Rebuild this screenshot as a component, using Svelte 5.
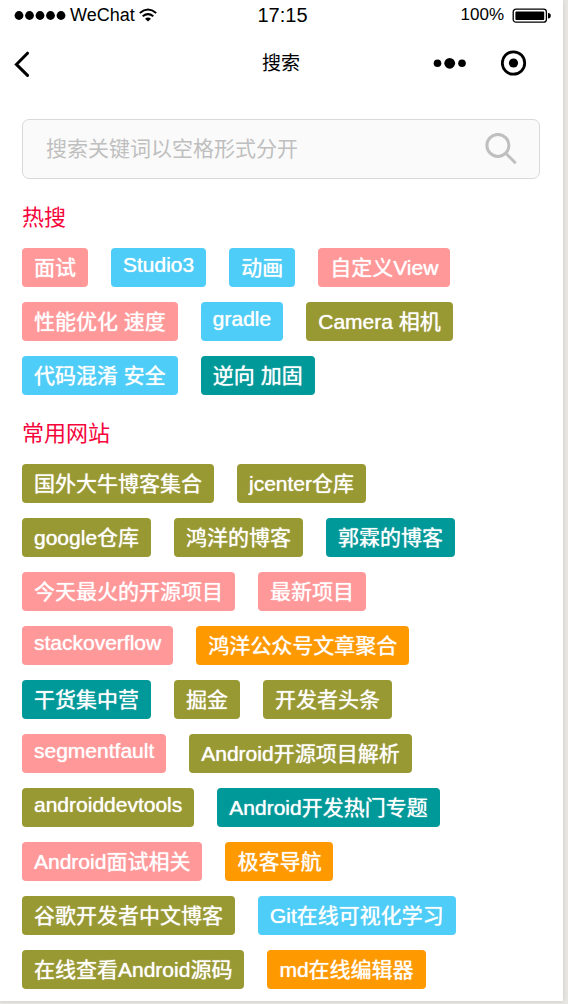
<script>
  const groups = [
    {
      title: '热搜',
      tags: [
        ['面试', 'pink'],
        ['Studio3', 'blue'],
        ['动画', 'blue'],
        ['自定义View', 'pink'],
        ['性能优化 速度', 'pink'],
        ['gradle', 'blue'],
        ['Camera 相机', 'olive'],
        ['代码混淆 安全', 'blue'],
        ['逆向 加固', 'teal']
      ]
    },
    {
      title: '常用网站',
      tags: [
        ['国外大牛博客集合', 'olive'],
        ['jcenter仓库', 'olive'],
        ['google仓库', 'olive'],
        ['鸿洋的博客', 'olive'],
        ['郭霖的博客', 'teal'],
        ['今天最火的开源项目', 'pink'],
        ['最新项目', 'pink'],
        ['stackoverflow', 'pink'],
        ['鸿洋公众号文章聚合', 'orange'],
        ['干货集中营', 'teal'],
        ['掘金', 'olive'],
        ['开发者头条', 'olive'],
        ['segmentfault', 'pink'],
        ['Android开源项目解析', 'olive'],
        ['androiddevtools', 'olive'],
        ['Android开发热门专题', 'teal'],
        ['Android面试相关', 'pink'],
        ['极客导航', 'orange'],
        ['谷歌开发者中文博客', 'olive'],
        ['Git在线可视化学习', 'blue'],
        ['在线查看Android源码', 'olive'],
        ['md在线编辑器', 'orange']
      ]
    }
  ];

  const isLatin = (text) => /^[\x20-\x7e]+$/.test(text);
  let query = $state('');
</script>

<div class="backdrop">
  <div class="screen">
    <div class="status">
      <div class="carrier">
        <svg width="52" height="10" viewBox="0 0 52 10" aria-hidden="true">
          {#each [5, 15.5, 26, 36.5, 47] as cx}
            <circle {cx} cy="5.5" r="4.4" />
          {/each}
        </svg>
        <span>WeChat</span>
        <svg width="18" height="14" viewBox="0 0 18 14" fill="none" stroke="#000" stroke-width="2" aria-hidden="true">
          <path d="M.8 4.9Q9-1.8 17.2 4.9" />
          <path d="M3.7 8.2Q9 4 14.3 8.2" />
          <path d="M6 10.8Q9 8.4 12 10.8L9 13.5Z" fill="#000" stroke="none" />
        </svg>
      </div>
      <time>17:15</time>
      <div class="power">
        <span>100%</span>
        <svg width="39" height="15" viewBox="0 0 39 15" aria-hidden="true">
          <rect x="1.2" y="1.2" width="33.2" height="13" rx="2.8" fill="none" stroke="#000" stroke-width="1.3" />
          <rect x="3.4" y="3.4" width="28.8" height="8.6" rx="1" />
          <path d="M36 5Q38.8 5.2 38.8 7.7T36 10.4Z" />
        </svg>
      </div>
    </div>

    <header>
      <button aria-label="返回">
        <svg width="16" height="28" viewBox="0 0 16 28" fill="none" stroke="#000" stroke-width="3" stroke-linecap="round" aria-hidden="true">
          <path d="M13.5 4.2L2.4 15.4L13.5 26.4" />
        </svg>
      </button>
      <h1>搜索</h1>
      <div class="actions">
        <button aria-label="更多">
          <svg width="34" height="12" viewBox="0 0 34 12" aria-hidden="true">
            <circle cx="4.5" cy="6.3" r="3.8" />
            <circle cx="16.7" cy="6.3" r="5.4" />
            <circle cx="29" cy="6.3" r="3.8" />
          </svg>
        </button>
        <button aria-label="关闭">
          <svg width="26" height="26" viewBox="0 0 26 26" aria-hidden="true">
            <circle cx="12.5" cy="13" r="11.2" fill="none" stroke="#000" stroke-width="2.8" />
            <circle cx="12.5" cy="13" r="4.6" />
          </svg>
        </button>
      </div>
    </header>

    <main>
      <form class="search" onsubmit={(e) => e.preventDefault()}>
        <input type="text" bind:value={query} aria-label="搜索关键词" placeholder="搜索关键词以空格形式分开" />
        <button aria-label="搜索">
          <svg width="32" height="32" viewBox="0 0 32 32" fill="none" stroke="#bfbfbf" stroke-width="3" aria-hidden="true">
            <circle cx="12.9" cy="12.4" r="11" />
            <path d="M20.7 20.2L30.7 30.2" />
          </svg>
        </button>
      </form>

      {#each groups as group}
        <section>
          <h2>{group.title}</h2>
          <div class="tags">
            {#each group.tags as [text, color]}
              <button class="tag {color}" class:latin={isLatin(text)}>{text}</button>
            {/each}
          </div>
        </section>
      {/each}
    </main>
  </div>
</div>

<style>
  :global(body) {
    margin: 0;
    background: #e8e7e3;
  }
  .backdrop {
    padding: 0 5px 3px 0;
    color: #000;
    font-family: "Liberation Sans", "Noto Sans CJK SC", sans-serif;
  }
  .screen {
    background: #fff;
    box-shadow: 0 0 5px #c8c8c4;
    padding-bottom: 12px;
  }
  button {
    display: flex;
    align-items: center;
    padding: 0;
    border: 0;
    background: none;
    font: inherit;
    cursor: pointer;
  }
  svg {
    display: block;
    flex: none;
  }
  .status {
    display: grid;
    grid-template-columns: 1fr auto 1fr;
    align-items: center;
    height: 30px;
    padding: 0 12px 0 14px;
    font-size: 17px;
  }
  .carrier,
  .power {
    display: flex;
    align-items: center;
  }
  .carrier {
    font-size: 18px;
    gap: 4px;
  }
  .power {
    justify-content: flex-end;
    gap: 8px;
  }
  time {
    font-size: 20px;
  }
  header {
    display: grid;
    grid-template-columns: 1fr auto 1fr;
    align-items: center;
    height: 66px;
    padding: 0 36px 0 14px;
    margin-bottom: 23px;
  }
  h1 {
    margin: 0;
    padding: 2px 0 0 21px;
    font-size: 19px;
    font-weight: 400;
    line-height: 26px;
  }
  .actions {
    display: flex;
    justify-content: flex-end;
    gap: 34px;
  }
  main {
    padding: 0 23px 0 22px;
  }
  .search {
    display: flex;
    align-items: center;
    height: 60px;
    box-sizing: border-box;
    padding: 0 22px 0 23px;
    border: 1px solid #d9d9d9;
    border-radius: 7px;
    background: #fafafa;
  }
  input {
    flex: 1;
    min-width: 0;
    padding: 0;
    border: 0;
    outline: 0;
    background: none;
    color: #333;
    font: inherit;
    font-size: 21px;
    line-height: 32px;
  }
  input::placeholder {
    color: #bfbfbf;
    opacity: 1;
  }
  h2 {
    margin: 0;
    padding-top: 23px;
    color: #f5053c;
    font-size: 22px;
    font-weight: 400;
    line-height: 32px;
  }
  .tags {
    display: flex;
    flex-wrap: wrap;
    row-gap: 15px;
    padding-top: 14px;
  }
  .tag {
    height: 39px;
    margin-right: 23px;
    padding: 0 12px;
    border-radius: 4px;
    color: #fff;
    font-size: 21px;
    font-weight: 400;
    line-height: 39px;
    text-shadow: 0 0 1px #fff;
    white-space: nowrap;
  }
  .latin {
    padding: 0 12px 6px;
  }
  .pink { background: #ff9999; }
  .blue { background: #4dcdf7; }
  .olive { background: #999933; }
  .teal { background: #009999; }
  .orange { background: #ff9900; }
</style>
